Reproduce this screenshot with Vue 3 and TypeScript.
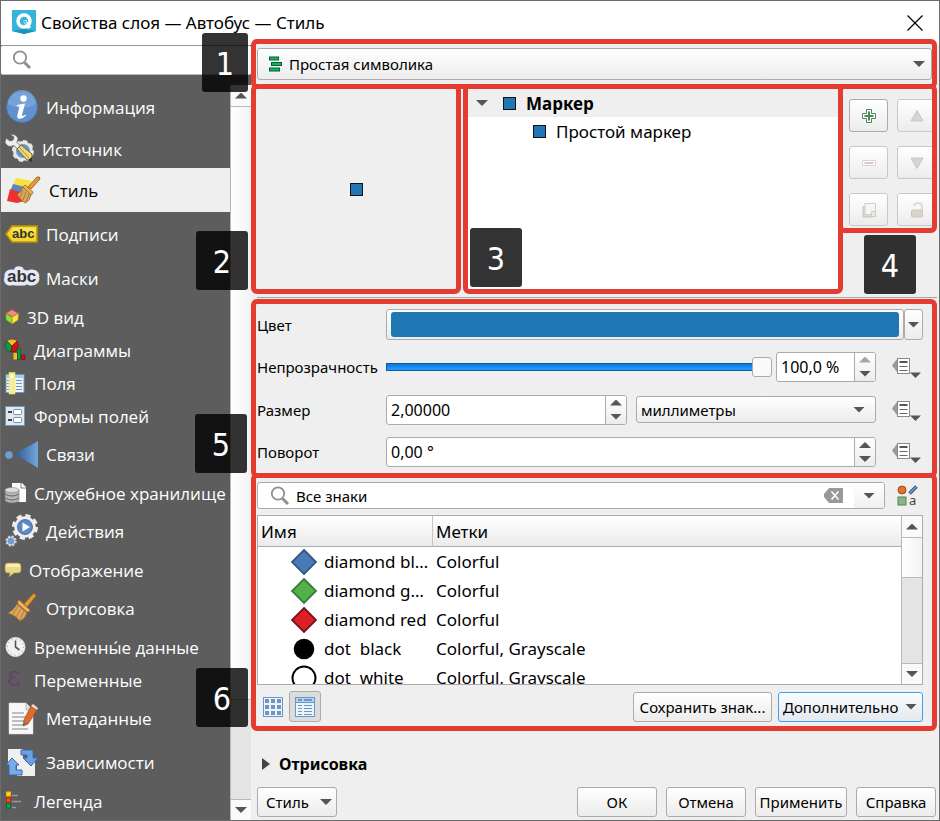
<script setup lang="ts">
import { ref } from 'vue'

interface NavItem {
  label: string
  icon: string
  w: number
  h: number
  size: 'tall' | 'mid' | 'short'
}

const art: Record<string, string> = {
  info: `<circle cx="17" cy="17" r="15.5" fill="#5f92cf" stroke="#4a78b0"/><path d="M3 14a14 14 0 0 1 28 0q-14 8-28 0z" fill="#7fa9dc" opacity=".7"/><circle cx="18.500" cy="8.500" r="3.200" fill="#fff"/><path d="M12 15l8-1.500-3 11.500q0 2 3.500-.5l.5 1q-4 4-7.500 3-2-1-1-4l2-8-3-.3z" fill="#fff"/>`,
  source: `<circle cx="18" cy="17" r="9" fill="none" stroke="#e6e6e6" stroke-width="4" stroke-dasharray="4 3"/><circle cx="18" cy="17" r="8.500" fill="#6a96cc" stroke="#e6e6e6" stroke-width="3"/><path d="M1 4l4 3 3-1 1-3-4-2.500q6-1 8 4l-1 4 4 4-3 3-4-4q-6 3-9-3z" fill="#eee" stroke="#666" stroke-width=".8"/><path d="M12 15l4-4 11 9v7l-5-1z" fill="#ecd97a" stroke="#75682c"/><path d="M14 13l10 11" stroke="#a6933f"/><path d="M23 26l4-3v5z" fill="#333"/>`,
  style: `<path d="M11 3l16 3-5 8L8 10z" fill="#f8e33c"/><path d="M8 9l16 4-3 8-16-4z" fill="#5688c8"/><path d="M5 14l17 5-2 7-8 2-10-2z" fill="#ee3030"/><path d="M23 12l9-10q3-1 3 2l-9 10z" fill="#e39a3a" stroke="#a8681d"/><path d="M20 10l8 7q0 2-2 3l-8-7q0-2 2-3z" fill="#e8ad58" stroke="#a8681d" stroke-width=".8"/><path d="M18 12l8 8q-1 6-6 8-5-4-8-8 4-3 6-8z" fill="#d9a660" stroke="#9b6c2c" stroke-width=".8"/><path d="M18 15l-3 7m6-5-3 8m6-6-3 8" stroke="#9b6c2c" stroke-width=".7"/>`,
  label: `<path d="M1 10L7 2h25v16H7z" fill="#f4d62c" stroke="#b99406" stroke-width="1.500"/><path d="M8 4h23v5H6z" fill="#fff176" opacity=".55"/><text x="7" y="14" font-family="Liberation Sans" font-weight="700" font-size="13" fill="#333">abc</text>`,
  mask: `<text x="2" y="18" font-family="Liberation Sans" font-weight="700" font-size="17" fill="#333" stroke="#e6e9f8" stroke-width="7" stroke-linejoin="round" paint-order="stroke">abc</text>`,
  cube: `<path d="M7 .5l6.500 4L7 8 .5 4.500z" fill="#f08a8a" stroke="#c33" stroke-width=".7"/><path d="M.5 4.500L7 8v7L1 11z" fill="#8ee03c" stroke="#4a8a12" stroke-width=".7"/><path d="M13.500 4.500L7 8v7l6-4z" fill="#ffe14a" stroke="#b39512" stroke-width=".7"/>`,
  chart: `<path d="M7 7L2 2q5-3 10 0z" fill="#fdbb12"/><path d="M7 7L2 2q-4 6 1 10l3 1z" fill="#0b9a4c" stroke="#054d26" stroke-width=".6"/><path d="M7 7l5-5q3 6-1 10l-5 1z" fill="#d11212" stroke="#6b0808" stroke-width=".6"/><rect x="8.500" y="14" width="3.500" height="6.500" fill="#fdbb12"/><rect x="12.500" y="9.500" width="3" height="11" fill="#0b9a4c" stroke="#054d26" stroke-width=".6"/><rect x="16.500" y="16" width="3.500" height="4.500" fill="#d11212" stroke="#6b0808" stroke-width=".6"/>`,
  fields: `<rect x="1" y="2.500" width="18" height="18" fill="#eef3f8" stroke="#6a96c8"/><path d="M1 3h18v3H1z" fill="#a9cde6"/><path d="M11 8.500h6m-6 3h6m-6 3h6m-6 3h6M2 8.500h2m-2 3h2m-2 3h2m-2 3h2" stroke="#6a96c8"/><rect x="4.500" y="1" width="5" height="20.500" fill="#f3ecb0" stroke="#f7f06a" stroke-width="1.500"/><circle cx="7" cy="4.500" r="1.500" fill="#fff"/>`,
  forms: `<rect x=".5" y=".5" width="19" height="19" fill="#e6e6e6" stroke="#6a96c8"/><path d="M3 6h4M3 14h4" stroke="#445" stroke-width="2"/><rect x="8.500" y="3.500" width="8" height="5" rx="1" fill="#fff" stroke="#6a96c8"/><rect x="8.500" y="11.500" width="8" height="5" rx="1" fill="#fff" stroke="#6a96c8"/>`,
  joins: `<defs><linearGradient id="gj"><stop offset="0" stop-color="#2d5c94"/><stop offset="1" stop-color="#74a5dc"/></linearGradient></defs><circle cx="4" cy="15" r="3.800" fill="#6f9ed4"/><path d="M10 14L33 1v27z" fill="url(#gj)"/>`,
  storage: `<path d="M7 1h10l4 4v15H7z" fill="#fafafa"/><path d="M16 1v5h5" fill="none" stroke="#888"/><path d="M0 8v11q7 4 14 0V8z" fill="#b5b5b5" stroke="#777" stroke-width=".6"/><path d="M0 12q7 4 14 0M0 16q7 4 14 0" fill="none" stroke="#666"/><ellipse cx="7" cy="8" rx="7" ry="2.500" fill="#dedede" stroke="#888" stroke-width=".6"/>`,
  actions: `<circle cx="20" cy="13" r="11" fill="none" stroke="#ededed" stroke-width="4" stroke-dasharray="5 3.640"/><circle cx="20" cy="13" r="9" fill="#5b8bc6" stroke="#ededed" stroke-width="3.500"/><circle cx="20" cy="13" r="7.500" fill="#5b8bc6" stroke="#34659f" stroke-width=".8"/><path d="M17.500 8.500L25 13l-7.500 4.500z" fill="#fff"/><circle cx="6" cy="27" r="4.700" fill="none" stroke="#ccd" stroke-width="2" stroke-dasharray="2 1.700"/><circle cx="6" cy="27" r="4" fill="#6f9ed4" stroke="#dde" stroke-width="1"/>`,
  display: `<path d="M3 1h10q3 0 3 3v4q0 3-3 3h-4l-5 4 1-4H3Q0 11 0 8V4q0-3 3-3z" fill="#e8d983" stroke="#a59648" stroke-width=".6"/><path d="M3 2h10q2 0 2 3H1q0-3 2-3z" fill="#f6eeb4"/>`,
  brush: `<path d="M19 12L28 2q3-1 3 2L22 15z" fill="#e39a3a" stroke="#a8681d"/><path d="M14 8l11 10q0 2-3 2L13 12q-1-3 1-4z" fill="#eab767" stroke="#a8681d" stroke-width=".8"/><path d="M12 12l10 9q-2 6-7 8-5-6-12-8 6-3 9-9z" fill="#dfa65a" stroke="#9b6c2c" stroke-width=".8"/><path d="M13 14l-5 8m8-5-5 8m8-6-4 9" stroke="#9b6c2c" stroke-width=".7"/>`,
  clock: `<circle cx="10.500" cy="10" r="9.500" fill="#f2f2f0" stroke="#dfe6ee"/><circle cx="10.500" cy="10" r="8" fill="none" stroke="#6f9ed4" stroke-dasharray="1 3.190"/><path d="M10.500 3.500V10l4 3" fill="none" stroke="#555" stroke-width="1.600"/>`,
  epsilon: `<text x="2" y="17" font-family="DejaVu Serif" font-size="26" fill="#6a3c74">ε</text>`,
  meta: `<path d="M4 1h17l7 7v24H4z" fill="#f8f8f8" stroke="#ddd" stroke-width=".5"/><path d="M21 1v7h7" fill="#ddd" stroke="#bbb"/><path d="M7 11h12M7 15h14M7 19h12M7 23h13M7 27h16" stroke="#aaa" stroke-width="1.400"/><path d="M26 4l6 4-9 14-5 2 1-6z" fill="#df6b2c" stroke="#9c4518" stroke-width=".7"/><path d="M26 4l6 4 1-2-5-4z" fill="#f6d9c8"/><path d="M18 24l1-5 4 3z" fill="#777"/>`,
  deps: `<path d="M3 1h15v13H3z" fill="#f0f0ee"/><path d="M12 11h18v17H12z" fill="#f0f0ee"/><path d="M16 2h12v8h5l-7 8-8-8h4V7h-6z" fill="#6a9fe4" stroke="#3c69ae"/><path d="M1 17l6-7 7 7h-3v5h6v5H4V17z" fill="#7aabe8" stroke="#3c69ae"/>`,
  legend: `<rect x="1.500" y="1" width="4" height="4" fill="#fddc12" stroke="#ffb000"/><rect x="1.500" y="7" width="4" height="4" fill="#ff4a12" stroke="#c42800"/><rect x="1.500" y="13" width="4" height="4" fill="#0db04c" stroke="#056b2c"/><path d="M7 4.500h6M7 10.500h9M7 16.500h4" stroke="#999" stroke-width="1.400"/>`,
}

const nav: NavItem[] = [
  { label: 'Информация', icon: 'info', w: 33, h: 34, size: 'tall' },
  { label: 'Источник', icon: 'source', w: 29, h: 29, size: 'mid' },
  { label: 'Стиль', icon: 'style', w: 36, h: 30, size: 'tall' },
  { label: 'Подписи', icon: 'label', w: 33, h: 20, size: 'tall' },
  { label: 'Маски', icon: 'mask', w: 33, h: 28, size: 'tall' },
  { label: '3D вид', icon: 'cube', w: 14, h: 16, size: 'short' },
  { label: 'Диаграммы', icon: 'chart', w: 21, h: 21, size: 'short' },
  { label: 'Поля', icon: 'fields', w: 21, h: 22, size: 'short' },
  { label: 'Формы полей', icon: 'forms', w: 21, h: 20, size: 'short' },
  { label: 'Связи', icon: 'joins', w: 33, h: 29, size: 'tall' },
  { label: 'Служебное хранилище', icon: 'storage', w: 21, h: 22, size: 'short' },
  { label: 'Действия', icon: 'actions', w: 33, h: 34, size: 'tall' },
  { label: 'Отображение', icon: 'display', w: 16, h: 16, size: 'short' },
  { label: 'Отрисовка', icon: 'brush', w: 33, h: 32, size: 'tall' },
  { label: 'Временны́е данные', icon: 'clock', w: 21, h: 20, size: 'short' },
  { label: 'Переменные', icon: 'epsilon', w: 21, h: 24, size: 'short' },
  { label: 'Метаданные', icon: 'meta', w: 33, h: 33, size: 'tall' },
  { label: 'Зависимости', icon: 'deps', w: 33, h: 29, size: 'tall' },
  { label: 'Легенда', icon: 'legend', w: 21, h: 20, size: 'short' },
]
const current = ref(2)

const symbols = [
  { name: 'diamond blue', tags: 'Colorful', kind: 'diamond', fill: '#487bb6', line: '#2f5886' },
  { name: 'diamond green', tags: 'Colorful', kind: 'diamond', fill: '#54b04a', line: '#3a7d33' },
  { name: 'diamond red', tags: 'Colorful', kind: 'diamond', fill: '#dc1f2b', line: '#801119' },
  { name: 'dot  black', tags: 'Colorful, Grayscale', kind: 'dot', fill: '#000', line: '#000' },
  { name: 'dot  white', tags: 'Colorful, Grayscale', kind: 'ring', fill: '#fff', line: '#000' },
]

const tools = [
  { name: 'Добавить', kind: 'add', off: false },
  { name: 'Вверх', kind: 'up', off: true },
  { name: 'Удалить', kind: 'remove', off: true },
  { name: 'Вниз', kind: 'down', off: true },
  { name: 'Дублировать', kind: 'copy', off: true },
  { name: 'Блокировать', kind: 'lock', off: true },
]

const opacity = ref(100)
const opacityText = ref('100,0 %')
const size = ref('2,00000')
const rotation = ref('0,00 °')
const query = ref('Все знаки')
const layerSearch = ref('')
</script>

<template>
  <div class="window">
    <header class="titlebar">
      <svg class="logo" width="24" height="24" viewBox="0 0 24 24">
        <path d="M0 0h24v21l-12 3-12-3z" fill="#33b5dc" />
        <path d="M0 21l12-2 12 2-12 3z" fill="#1e93b8" />
        <circle cx="12" cy="11" r="6" fill="none" stroke="#fff" stroke-width="3.500" />
        <path d="M11 11l3-1 5 7-3 2z" fill="#fff" />
        <path d="M11 11l3 0 1 4z" fill="#33b5dc" />
      </svg>
      <h1>Свойства слоя — Автобус — Стиль</h1>
      <button class="close" aria-label="Закрыть">
        <svg width="16" height="16" viewBox="0 0 16 16"><path d="M.5.5l15 15M15.500.5l-15 15" stroke="#000" stroke-width="1.200" /></svg>
      </button>
    </header>

    <div class="body">
      <aside class="sidebar">
        <label class="side-search">
          <svg width="20" height="20" viewBox="0 0 20 20"><circle cx="8" cy="7.500" r="6.200" fill="none" stroke="#8f8f8f" stroke-width="1.800" /><path d="M12.500 12.500l5.500 5.500" stroke="#8f8f8f" stroke-width="3" /></svg>
          <input v-model="layerSearch" type="text" aria-label="Поиск" />
        </label>
        <div class="side-body">
          <nav>
            <a
              v-for="(item, i) in nav"
              :key="item.icon"
              href="#"
              :class="[item.size, { active: i === current }]"
              @click.prevent="current = i"
            >
              <svg :width="item.w" :height="item.h" :viewBox="`0 0 ${item.w} ${item.h}`" v-html="art[item.icon]"></svg>
              <span>{{ item.label }}</span>
            </a>
          </nav>
          <div class="scroll side-scroll">
            <button aria-label="Прокрутить вверх"><i class="tri up"></i></button>
            <div class="thumb"></div>
            <div class="groove"></div>
            <button aria-label="Прокрутить вниз"><i class="tri"></i></button>
          </div>
        </div>
        <b class="badge b1">1</b>
        <b class="badge b2">2</b>
        <b class="badge b5">5</b>
        <b class="badge b6">6</b>
      </aside>

      <main>
        <section class="frame f1">
          <div class="combo renderer">
            <svg width="13" height="16" viewBox="0 0 13 16"><g fill="#0fb85a" stroke="#0a5c34"><rect x=".5" y="1" width="9" height="3" /><rect x="2.500" y="6.500" width="10" height="3" /><rect x=".5" y="12" width="10" height="3" /></g></svg>
            <select aria-label="Символика"><option>Простая символика</option></select>
            <i class="tri"></i>
          </div>
        </section>

        <div class="top-row">
          <section class="frame f2"><i class="marker"></i></section>
          <section class="frame f3">
            <ul class="tree">
              <li class="root"><i class="tri"></i><i class="marker"></i><strong>Маркер</strong></li>
              <li class="leaf"><i class="marker"></i><span>Простой маркер</span></li>
            </ul>
            <b class="badge b3">3</b>
          </section>
          <div class="tool-col">
            <section class="frame f4">
              <button v-for="t in tools" :key="t.kind" class="btn tool" :class="{ off: t.off }" :aria-label="t.name" :disabled="t.off">
                <svg width="16" height="16" viewBox="0 0 16 16">
                  <template v-if="t.kind === 'add'"><path d="M5.500 1.500h5v4h4v5h-4v4h-5v-4h-4v-5h4z" fill="#fff" stroke="#4f8a55" /><path d="M8 3.500v9M3.500 8h9" stroke="#4f8a55" stroke-width="2" /></template>
                  <template v-else-if="t.kind === 'remove'"><path d="M1.500 5.500h13v5h-13z" fill="#fff" stroke="#e2cfd0" /><path d="M3.500 8h9" stroke="#dcc8ca" stroke-width="2" /></template>
                  <path v-else-if="t.kind === 'up'" d="M8 2.500l6 10.500H2z" fill="#d3d6d8" stroke="#c4c7c9" />
                  <path v-else-if="t.kind === 'down'" d="M8 13.500L2 3h12z" fill="#d3d6d8" stroke="#c4c7c9" />
                  <template v-else-if="t.kind === 'copy'"><path d="M2.500 4v10.500h9" fill="none" stroke="#cacaca" stroke-width="2" /><path d="M4 1.500h10.500v11H4z" fill="#f6f6f6" stroke="#cdcdcd" /><path d="M10.500 9.500h4v5h-4z" fill="#e9e8dc" stroke="#cdcdb9" /></template>
                  <template v-else><path d="M5 4q1-3 4-3 4 0 4 4v3" fill="none" stroke="#dcdcdc" stroke-width="2" /><rect x="2.500" y="8" width="11" height="7" rx="1" fill="#d8d5c8" stroke="#cdc9b9" /></template>
                </svg>
              </button>
            </section>
            <b class="badge b4">4</b>
          </div>
        </div>

        <hr />

        <section class="frame f5">
          <div class="row">
            <label for="color">Цвет</label>
            <div class="field color-field">
              <button id="color" class="btn color" aria-label="Цвет"><i></i></button>
              <button class="btn color-more" aria-label="Меню цвета"><i class="tri"></i></button>
            </div>
          </div>
          <div class="row">
            <label for="opacity">Непрозрачность</label>
            <div class="field">
              <input id="opacity" v-model="opacity" type="range" min="0" max="100" />
              <div class="spin narrow">
                <input v-model="opacityText" type="text" aria-label="Непрозрачность, %" />
                <div class="steps"><button aria-label="Больше"><i class="tri up dim"></i></button><button aria-label="Меньше"><i class="tri"></i></button></div>
              </div>
            </div>
            <button class="override" aria-label="Переопределить непрозрачность">
              <svg width="29" height="22" viewBox="0 0 29 22"><path d="M5 2v13L0 8.500z" fill="#9a9a9a" /><rect x="5.500" y="1.500" width="12" height="15" fill="#fff" stroke="#8a8a8a" /><path d="M7.500 5h8" stroke="#555" stroke-width="2" /><path d="M7.500 9.500h8M7.500 13.500h8" stroke="#666" /><path d="M18 15.500h11L23.500 21z" fill="#555" /></svg>
            </button>
          </div>
          <div class="row">
            <label for="size">Размер</label>
            <div class="field">
              <div class="spin">
                <input id="size" v-model="size" type="text" />
                <div class="steps"><button aria-label="Больше"><i class="tri up"></i></button><button aria-label="Меньше"><i class="tri"></i></button></div>
              </div>
              <div class="combo units">
                <select aria-label="Единицы"><option>миллиметры</option></select>
                <i class="tri"></i>
              </div>
            </div>
            <button class="override" aria-label="Переопределить размер">
              <svg width="29" height="22" viewBox="0 0 29 22"><path d="M5 2v13L0 8.500z" fill="#9a9a9a" /><rect x="5.500" y="1.500" width="12" height="15" fill="#fff" stroke="#8a8a8a" /><path d="M7.500 5h8" stroke="#555" stroke-width="2" /><path d="M7.500 9.500h8M7.500 13.500h8" stroke="#666" /><path d="M18 15.500h11L23.500 21z" fill="#555" /></svg>
            </button>
          </div>
          <div class="row">
            <label for="rotation">Поворот</label>
            <div class="field">
              <div class="spin">
                <input id="rotation" v-model="rotation" type="text" />
                <div class="steps"><button aria-label="Больше"><i class="tri up"></i></button><button aria-label="Меньше"><i class="tri"></i></button></div>
              </div>
            </div>
            <button class="override" aria-label="Переопределить поворот">
              <svg width="29" height="22" viewBox="0 0 29 22"><path d="M5 2v13L0 8.500z" fill="#9a9a9a" /><rect x="5.500" y="1.500" width="12" height="15" fill="#fff" stroke="#8a8a8a" /><path d="M7.500 5h8" stroke="#555" stroke-width="2" /><path d="M7.500 9.500h8M7.500 13.500h8" stroke="#666" /><path d="M18 15.500h11L23.500 21z" fill="#555" /></svg>
            </button>
          </div>
        </section>

        <section class="frame f6">
          <div class="find-row">
            <div class="find">
              <svg width="20" height="20" viewBox="0 0 20 20"><circle cx="8" cy="7.500" r="6.200" fill="none" stroke="#8f8f8f" stroke-width="1.800" /><path d="M12.500 12.500l5.500 5.500" stroke="#8f8f8f" stroke-width="3" /></svg>
              <input v-model="query" type="text" aria-label="Поиск знаков" />
              <button class="clear" aria-label="Очистить" @click="query = ''">
                <svg width="19" height="15" viewBox="0 0 19 15"><path d="M5 0h14v15H5L0 9V6z" fill="#999" /><path d="M7.500 3.500l7 8M14.500 3.500l-7 8" stroke="#fff" stroke-width="1.500" /></svg>
              </button>
              <button class="more" aria-label="Список знаков"><i class="tri"></i></button>
            </div>
            <button class="manager" aria-label="Управление стилями">
              <svg width="21" height="22" viewBox="0 0 21 22"><circle cx="5" cy="5" r="4" fill="#e0702f" stroke="#a84a18" /><path d="M12.500 8.500l7-7" stroke="#34507a" stroke-width="3.500" /><path d="M12.500 8.500l7-7" stroke="#7ba3d0" stroke-width="1.500" /><rect x="1" y="12" width="8" height="8" fill="#8fb18f" stroke="#4f8a55" /><text x="12" y="20" font-family="Noto Sans" font-size="13" fill="#444">a</text></svg>
            </button>
          </div>

          <div class="list">
            <div class="list-view">
              <table>
                <thead>
                  <tr><th class="c-name">Имя</th><th>Метки</th></tr>
                </thead>
                <tbody>
                  <tr v-for="s in symbols" :key="s.name">
                    <td class="c-name">
                      <div class="sym">
                        <svg width="28" height="28" viewBox="0 0 28 28">
                          <path v-if="s.kind === 'diamond'" d="M14 2l12 12-12 12L2 14z" :fill="s.fill" :stroke="s.line" stroke-width="1.800" />
                          <circle v-else-if="s.kind === 'dot'" cx="14" cy="14" r="10.300" :fill="s.fill" />
                          <circle v-else cx="14" cy="14" r="11.500" :fill="s.fill" :stroke="s.line" stroke-width="2" />
                        </svg>
                        <span>{{ s.name }}</span>
                      </div>
                    </td>
                    <td>{{ s.tags }}</td>
                  </tr>
                </tbody>
              </table>
            </div>
            <div class="scroll list-scroll">
              <button aria-label="Прокрутить вверх"><i class="tri up"></i></button>
              <div class="thumb"></div>
              <div class="groove"></div>
              <button aria-label="Прокрутить вниз"><i class="tri"></i></button>
            </div>
          </div>

          <div class="list-bar">
            <button class="view" aria-label="Значки">
              <svg width="20" height="20" viewBox="0 0 20 20"><rect x=".5" y=".5" width="19" height="19" fill="#eef3f8" stroke="#6a96c8" /><path d="M2 4h16M2 10h16M2 16h16" stroke="#6a96c8" stroke-width="4" stroke-dasharray="4 2" /></svg>
            </button>
            <button class="view on" aria-label="Список">
              <svg width="20" height="20" viewBox="0 0 20 20"><rect x=".5" y=".5" width="19" height="19" fill="#eef3f8" stroke="#6a96c8" /><path d="M1 1h18v4H1z" fill="#b5d5ee" /><path d="M1 5.500h18" stroke="#6a96c8" /><path d="M3 3h4M9 3h8" stroke="#6a96c8" stroke-width="2" /><path d="M3 8.500h4M9 8.500h8M3 11.500h4M9 11.500h8M3 14.500h4M9 14.500h8M3 17.500h4M9 17.500h8" stroke="#6a96c8" /></svg>
            </button>
            <span class="grow"></span>
            <button class="btn save">Сохранить знак...</button>
            <button class="btn extra">Дополнительно<i class="tri"></i></button>
          </div>
        </section>

        <button class="fold"><svg width="8" height="12" viewBox="0 0 8 12"><path d="M0 0l8 6-8 6z" fill="#444" /></svg>Отрисовка</button>

        <footer>
          <button class="btn style-menu">Стиль<i class="tri"></i></button>
          <span class="grow"></span>
          <button class="btn act">ОК</button>
          <button class="btn act">Отмена</button>
          <button class="btn act wide">Применить</button>
          <button class="btn act">Справка</button>
        </footer>
      </main>
    </div>
  </div>
</template>

<style>
body {
  margin: 0;
  background: #efefef;
}
</style>

<style scoped>
* {
  box-sizing: border-box;
}
.window {
  min-height: 100vh;
  display: flex;
  flex-direction: column;
  border: 1px solid #6b6b6b;
  background: #efefef;
  font: 16px/22px 'Noto Sans', 'Open Sans', sans-serif;
  color: #000;
}
button,
input,
select {
  font: inherit;
  color: inherit;
  margin: 0;
  padding: 0;
  border: 0;
  background: none;
  outline: none;
  min-width: 0;
}
svg {
  display: block;
  flex: none;
  overflow: visible;
}
.titlebar {
  height: 44px;
  flex: none;
  display: flex;
  align-items: center;
  gap: 5px;
  padding: 0 16px 0 11px;
  background: #fff;
}
.titlebar .logo {
  margin-bottom: 2px;
}
.titlebar h1 {
  flex: 1;
  margin: 0;
  font-size: 17px;
  font-weight: 400;
}
.body {
  flex: 1;
  display: flex;
}

/* sidebar */
.sidebar {
  position: relative;
  width: 250px;
  flex: none;
  display: flex;
  flex-direction: column;
  background: #5d5d5d;
}
.side-search {
  display: flex;
  align-items: center;
  height: 30px;
  padding: 0 11px;
  gap: 6px;
  background: #fff;
  border-top: 1px solid #999;
  border-bottom: 1px solid #bbb;
  border-radius: 2px;
}
.side-search input {
  flex: 1;
}
.side-body {
  flex: 1;
  display: flex;
  padding-top: 10px;
}
nav {
  flex: 1;
  display: flex;
  flex-direction: column;
}
nav a {
  display: flex;
  align-items: center;
  gap: 8px;
  padding-left: 4px;
  color: #fff;
  text-decoration: none;
  font: 17px/22px 'Open Sans', 'Noto Sans', sans-serif;
  white-space: nowrap;
}
nav a span {
  padding-top: 2px;
}
.tall {
  height: 44px;
}
.mid {
  height: 39px;
}
.short {
  height: 33px;
}
nav a.active {
  background: #efefef;
  color: #000;
}

/* scroll bars */
.scroll {
  width: 21px;
  display: flex;
  flex-direction: column;
  border-left: 1px solid #b9b9b9;
  background: #e4e4e4;
}
.scroll button {
  height: 21px;
  display: grid;
  place-items: center;
  background: #fafafa;
}
.thumb {
  background: linear-gradient(90deg, #fff, #f3f3f3);
  border-top: 1px solid #b9b9b9;
  border-bottom: 1px solid #b9b9b9;
}
.side-scroll .thumb {
  flex: 6;
}
.side-scroll .groove {
  flex: 1;
}
.scroll button:last-child {
  border-top: 1px solid #b9b9b9;
}
.list-scroll .thumb {
  flex: 40;
}
.list-scroll .groove {
  flex: 87;
}
.tri {
  width: 12px;
  height: 6px;
  flex: none;
  background: #555;
  clip-path: polygon(0 0, 100% 0, 50% 100%);
  pointer-events: none;
}
.tri.up {
  clip-path: polygon(50% 0, 100% 100%, 0 100%);
}
.tri.dim {
  background: #a5a5a5;
}

/* numbered badges over the regions */
.badge {
  position: absolute;
  z-index: 3;
  width: 52px;
  height: 59px;
  display: grid;
  place-items: center;
  padding-top: 2px;
  border-radius: 3px;
  background: rgba(0, 0, 0, 0.8);
  color: #fff;
  font: 400 32px/36px 'DejaVu Sans Condensed', 'DejaVu Sans', sans-serif;
}
.b1 {
  top: -12px;
  right: 3px;
  width: 46px;
}
.b2 {
  top: 186px;
  right: 3px;
}
.b5 {
  top: 369px;
  right: 4px;
}
.b6 {
  top: 623px;
  right: 3px;
}
.b3 {
  left: 2px;
  bottom: 2px;
}
.b4 {
  left: 26px;
  top: 151px;
}

/* framed regions */
main {
  flex: 1;
  min-width: 0;
  display: flex;
  flex-direction: column;
  padding-right: 2px;
}
.frame {
  position: relative;
  z-index: 1;
  border: 5px solid #e53c32;
  border-radius: 6px;
  overflow: hidden;
}
.f1 {
  margin-top: -6px;
  padding: 4px 0 4px 1px;
  background: #efefef;
}
.btn,
.combo {
  border: 1px solid #ababab;
  border-radius: 3px;
  background: linear-gradient(#fff, #ececec);
}
.combo {
  display: flex;
  align-items: center;
}
.combo select {
  flex: 1;
  height: 100%;
  appearance: none;
}
.renderer {
  height: 32px;
  padding: 0 6px 0 11px;
  gap: 7px;
  font-size: 15px;
}
.top-row {
  display: flex;
  align-items: flex-start;
  margin-top: -5px;
}
.f2 {
  flex: 200;
  height: 210px;
  display: grid;
  place-items: center;
}
.f3 {
  flex: 370;
  height: 210px;
  margin-left: 2px;
  background: #fff;
}
.marker {
  width: 13px;
  height: 13px;
  flex: none;
  background: #1f78b4;
  border: 1px solid #111;
}
.tree {
  margin: 0;
  padding: 0;
  list-style: none;
  font-size: 17px;
}
.tree li {
  height: 28px;
  display: flex;
  align-items: center;
}
.tree .root {
  gap: 10px;
  padding-left: 8px;
  background: #efefef;
}
.tree .root .marker {
  margin-left: 5px;
}
.tree strong,
.tree span {
  padding-top: 2px;
}
.tree .leaf {
  gap: 10px;
  padding-left: 65px;
}
.tool-col {
  position: relative;
  flex: none;
  width: 99px;
  margin-left: -5px;
}
.f4 {
  height: 149px;
  display: grid;
  grid-template-columns: 39px 39px;
  grid-auto-rows: 33px;
  gap: 14px 9px;
  padding: 10px 0 0 6px;
}
.tool {
  display: grid;
  place-items: center;
}
.tool.off {
  border-color: #c8c8c8;
}
hr {
  height: 1px;
  margin: 3px 0 1px 6px;
  border: 0;
  background: #a5a5a5;
}

/* symbol properties */
.f5 {
  display: flex;
  flex-direction: column;
  padding: 0 11px 0 1px;
}
.row {
  height: 43px;
  display: flex;
  align-items: center;
}
.row:first-child {
  height: 41px;
}
.row:last-child {
  height: 42px;
}
.row label {
  width: 129px;
  flex: none;
  font-size: 15px;
}
.field {
  flex: 1;
  min-width: 0;
  display: flex;
  align-items: center;
}
.color-field {
  margin-right: -2px;
}
.color {
  flex: 1;
  height: 31px;
  display: flex;
  padding: 2px 4px;
}
.color i {
  flex: 1;
  border-radius: 3px;
  background: #1f78b4;
}
.color-more {
  width: 19px;
  height: 31px;
  display: grid;
  place-items: center;
}
.spin {
  flex: 1;
  height: 30px;
  display: flex;
  overflow: hidden;
  border: 1px solid #ababab;
  border-radius: 3px;
  background: #fff;
}
.spin.narrow {
  flex: none;
  width: 100px;
  margin-left: 4px;
}
.spin input {
  flex: 1;
  width: 0;
  padding-left: 4px;
}
.steps {
  width: 21px;
  display: flex;
  flex-direction: column;
  border-left: 1px solid #ababab;
  background: linear-gradient(#fff, #ececec);
}
.steps button {
  flex: 1;
  display: grid;
  place-items: center;
}
.units {
  width: 240px;
  height: 27px;
  margin-left: 9px;
  padding: 0 10px 0 4px;
  font-size: 15px;
}
.override {
  margin: 2px 0 0 16px;
}
input[type='range'] {
  flex: 1;
  height: 20px;
  appearance: none;
}
input[type='range']::-webkit-slider-runnable-track {
  height: 8px;
  border: 1px solid #0a5ca8;
  border-right: 0;
  background: linear-gradient(#0a78e0, #2a9bff);
}
input[type='range']::-webkit-slider-thumb {
  appearance: none;
  width: 20px;
  height: 20px;
  margin-top: -7px;
  border: 1px solid #ababab;
  border-radius: 3px;
  background: #fafafa;
}

/* symbol library */
.f6 {
  margin-top: -5px;
  padding: 4px 9px 4px 1px;
}
.find-row {
  display: flex;
  align-items: center;
}
.find {
  flex: 1;
  height: 27px;
  display: flex;
  align-items: center;
  overflow: hidden;
  border: 1px solid #ababab;
  border-radius: 3px;
  background: #fff;
  padding-left: 12px;
  font-size: 15px;
}
.find input {
  flex: 1;
  padding-left: 6px;
}
.clear {
  margin-right: 11px;
}
.more {
  align-self: stretch;
  width: 30px;
  display: grid;
  place-items: center;
  background: linear-gradient(#fff, #f0f0f0);
}
.manager {
  margin: 0 5px 0 12px;
}
.list {
  height: 170px;
  margin-top: 6px;
  display: flex;
  border: 1px solid #ababab;
  background: #fff;
}
.list-view {
  flex: 1;
  overflow: hidden;
}
table {
  width: 100%;
  table-layout: fixed;
  border-collapse: separate;
  border-spacing: 0;
  font-size: 17px;
}
th {
  height: 31px;
  padding: 2px 4px 0 3px;
  text-align: left;
  font-weight: 400;
  border-bottom: 1px solid #ababab;
  background: linear-gradient(#fff, #ebebeb);
}
th.c-name {
  width: 175px;
  border-right: 1px solid #c6c6c6;
}
td {
  height: 29px;
  padding: 0 0 0 3px;
  white-space: pre;
}
td.c-name {
  padding: 0 4px 0 32px;
}
.sym {
  display: flex;
  align-items: center;
  gap: 6px;
  height: 29px;
}
.sym span {
  overflow: hidden;
  text-overflow: ellipsis;
}
.list-bar {
  display: flex;
  align-items: center;
  margin-top: 6px;
}
.view {
  width: 32px;
  height: 31px;
  display: grid;
  place-items: center;
  border-radius: 3px;
}
.view.on {
  border: 1px solid #ababab;
  background: #dcdcdc;
}
.grow {
  flex: 1;
}
.save {
  width: 139px;
  height: 30px;
  font-size: 15px;
}
.extra {
  width: 145px;
  height: 30px;
  margin-left: 6px;
  display: flex;
  align-items: center;
  justify-content: space-between;
  padding: 0 5px 0 4px;
  border-color: #3fa0ee;
  background: linear-gradient(#fbfdff, #e3e9ef);
  font-size: 15px;
}
.fold {
  align-self: flex-start;
  display: flex;
  align-items: center;
  gap: 9px;
  margin: 22px 0 12px 11px;
  font-size: 16px;
  font-weight: 700;
}
footer {
  display: flex;
  gap: 9px;
  padding: 0 1px 3px 6px;
}
.style-menu {
  width: 80px;
  height: 30px;
  display: flex;
  align-items: center;
  justify-content: space-between;
  padding: 0 4px 0 8px;
  font-size: 15px;
}
.act {
  width: 80px;
  height: 30px;
  font-size: 15px;
}
.act.wide {
  width: 92px;
}
</style>
